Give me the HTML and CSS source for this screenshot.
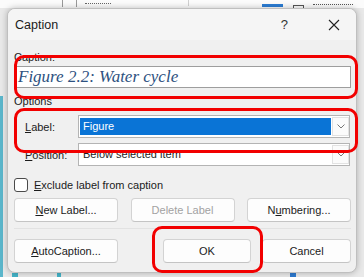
FILE: index.html
```html
<!DOCTYPE html>
<html lang="en">
<head>
    <meta charset="UTF-8">
    <title>Caption</title>
    <link rel="stylesheet" href="styles.css">
</head>
<body>
    <!-- Word window peeking out behind the dialog -->
    <div class="backdrop">
        <span class="rb rb-tick1"></span>
        <span class="rb rb-line1"></span>
        <span class="rb rb-line2"></span>
        <span class="rb rb-text1"></span>
        <span class="rb rb-line3"></span>
        <span class="rb rb-blue"></span>
        <span class="rb rb-icon"></span>
        <span class="rb rb-text2"></span>
        <span class="rb rb-side"></span>
        <span class="rb rb-foot1"></span>
        <span class="rb rb-foot2"></span>
        <span class="rb rb-foot3"></span>
    </div>

    <!-- Caption dialog -->
    <div class="dialog">
        <div class="titlebar">
            <span class="title">Caption</span>
            <span class="help">?</span>
            <span class="close">
                <svg width="12" height="12" viewBox="0 0 12 12"><path d="M1 1 L11 11 M11 1 L1 11" stroke="#222" stroke-width="1.1" fill="none"/></svg>
            </span>
        </div>

        <div class="dialog-body">
            <div class="field-label">Caption:</div>
            <div class="text-input">Figure 2.2: Water cycle</div>

            <div class="group-label">Options</div>

            <div class="option-row">
                <span class="row-label"><u>L</u>abel:</span>
                <div class="select">
                    <span class="select-value selected">Figure</span>
                    <span class="select-arrow">
                        <svg width="8" height="5" viewBox="0 0 8 5"><path d="M0.5 0.5 L4 4 L7.5 0.5" stroke="#777" stroke-width="1" fill="none"/></svg>
                    </span>
                </div>
            </div>

            <div class="option-row second">
                <span class="row-label"><u>P</u>osition:</span>
                <div class="select">
                    <span class="select-value">Below selected item</span>
                    <span class="select-arrow">
                        <svg width="8" height="5" viewBox="0 0 8 5"><path d="M0.5 0.5 L4 4 L7.5 0.5" stroke="#777" stroke-width="1" fill="none"/></svg>
                    </span>
                </div>
            </div>

            <label class="check-row">
                <span class="checkbox"></span>
                <span><u>E</u>xclude label from caption</span>
            </label>

            <div class="button-row">
                <div class="btn"><u>N</u>ew Label...</div>
                <div class="btn disabled">Delete Label</div>
                <div class="btn">N<u>u</u>mbering...</div>
            </div>

            <div class="separator"></div>

            <div class="button-row bottom">
                <div class="btn"><u>A</u>utoCaption...</div>
                <div class="btn btn-ok">OK</div>
                <div class="btn btn-cancel">Cancel</div>
            </div>
        </div>
    </div>

    <!-- Red annotation boxes -->
    <div class="mark mark-caption"></div>
    <div class="mark mark-label"></div>
    <div class="mark mark-ok"></div>
</body>
</html>
```

FILE: styles.css
```css
body {
    margin: 0;
    width: 364px;
    height: 277px;
    overflow: hidden;
    position: relative;
    background-color: #e9e9e9;
    font-family: 'Liberation Sans', Arial, sans-serif;
    font-size: 11px;
    color: #1b1b1b;
    padding: 8px 0 0 7px;
    box-sizing: border-box;
}

/* Backdrop: bits of the Word ribbon around the dialog */
.backdrop {
    position: absolute;
    top: 0;
    left: 0;
    width: 364px;
    height: 277px;
}

.rb {
    position: absolute;
    display: block;
}

.rb-tick1 { left: 0; top: 0; width: 364px; height: 8px; background: #fbfbfb; }
.rb-line1 { left: 62px; top: 0; width: 1px; height: 7px; background: #9a9a9a; }
.rb-line2 { left: 76px; top: 0; width: 1px; height: 7px; background: #9a9a9a; }
.rb-text1 { left: 85px; top: 3px; width: 26px; height: 3px; border-top: 1px dotted #666; }
.rb-line3 { left: 188px; top: 0; width: 1px; height: 6px; background: #d0d0d0; }
.rb-blue { left: 262px; top: 4px; width: 21px; height: 3px; background: #2b7cd3; }
.rb-icon { left: 293px; top: 5px; width: 9px; height: 4px; border: 1px solid #555; border-bottom: none; }
.rb-text2 { left: 313px; top: 4px; width: 40px; height: 3px; border-top: 1px dotted #555; }
.rb-side { left: 0; top: 96px; width: 3px; height: 181px; background: #5bb6cb; }
.rb-foot1 { left: 12px; top: 273px; width: 6px; height: 4px; background: #43b3c8; }
.rb-foot2 { left: 57px; top: 273px; width: 4px; height: 4px; background: #43b3c8; }
.rb-foot3 { left: 290px; top: 273px; width: 6px; height: 4px; background: #2d7ad0; }

/* Dialog window */
.dialog {
    position: relative;
    width: 350px;
    height: 265px;
    box-sizing: border-box;
    background-color: #f0f0f0;
    border: 1px solid #bfbfbf;
    border-radius: 8px;
    box-shadow: 0 0 6px rgba(0, 0, 0, 0.25);
    overflow: hidden;
}

.titlebar {
    height: 31px;
    display: flex;
    align-items: center;
    padding-left: 7px;
    background-color: #f5f5f5;
}

.title {
    flex: 1;
    font-size: 12.5px;
    color: #1b1b1b;
}

.help {
    font-size: 13px;
    color: #333;
    margin-right: 40px;
}

.close {
    display: flex;
    margin-right: 16px;
}

.dialog-body {
    padding: 0 5px 0 6px;
}

.field-label,
.group-label {
    line-height: 14px;
    margin-top: 10px;
}

.group-label {
    margin-top: 6px;
}

.text-input {
    margin-top: 2px;
    height: 22px;
    box-sizing: border-box;
    background: #fff;
    border: 1px solid #9e9e9e;
    padding-left: 3px;
    font-family: 'Liberation Serif', 'Times New Roman', serif;
    font-style: italic;
    font-size: 17px;
    line-height: 20px;
    color: #2d5180;
}

/* Label / Position rows */
.option-row {
    display: flex;
    align-items: center;
    margin-top: 7px;
    height: 23px;
}

.option-row.second {
    margin-top: 5px;
}

.row-label {
    width: 53px;
    padding-left: 11px;
}

.select {
    width: 272px;
    height: 23px;
    box-sizing: border-box;
    background: #fff;
    border: 1px solid #b4b4b4;
    display: flex;
    padding: 1px 0 1px 1px;
}

.select-value {
    flex: 1;
    padding-left: 3px;
    line-height: 19px;
}

.select-value.selected {
    background-color: #0a74d6;
    color: #fff;
    margin: 1px 1px 1px 0;
    line-height: 17px;
}

.select-arrow {
    width: 17px;
    box-sizing: border-box;
    border: 1px solid #e2e2e2;
    background: #fbfbfb;
    display: flex;
    align-items: center;
    justify-content: center;
}

/* Checkbox */
.check-row {
    display: flex;
    align-items: center;
    margin-top: 12px;
    height: 14px;
}

.checkbox {
    width: 14px;
    height: 14px;
    box-sizing: border-box;
    border: 1px solid #4a4a4a;
    border-radius: 3px;
    background: #fff;
    margin-right: 6px;
}

/* Buttons */
.button-row {
    display: flex;
    justify-content: space-between;
    margin-top: 6px;
}

.button-row.bottom {
    margin-top: 10px;
}

.btn {
    flex: none;
    width: 104px;
    height: 24px;
    box-sizing: border-box;
    background: #fdfdfd;
    border: 1px solid #d3d3d3;
    border-bottom-color: #c4c4c4;
    border-radius: 4px;
    display: flex;
    align-items: center;
    justify-content: center;
    color: #1b1b1b;
}

.btn.disabled {
    color: #a2a2a2;
}

.btn-ok {
    width: 88px;
    margin-left: auto;
    margin-right: 11px;
}

.btn-cancel {
    width: 89px;
}

.separator {
    margin-top: 6px;
    height: 1px;
    background: #e2e2e2;
}

/* Red annotation boxes */
.mark {
    position: absolute;
    box-sizing: border-box;
    border: 3px solid #f20000;
    border-radius: 10px;
}

.mark-caption { left: 14px; top: 55px; width: 344px; height: 44px; }
.mark-label { left: 14px; top: 108px; width: 344px; height: 45px; }
.mark-ok { left: 152px; top: 226px; width: 111px; height: 47px; }
```
